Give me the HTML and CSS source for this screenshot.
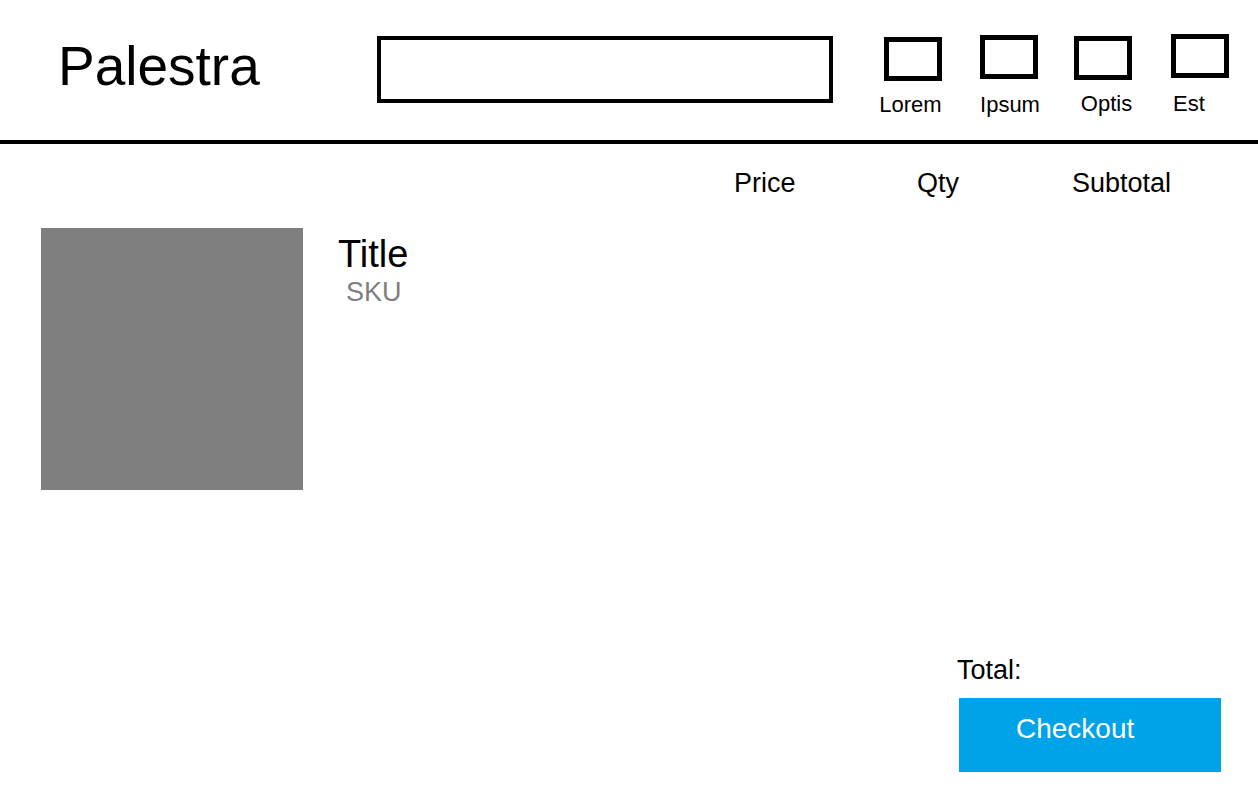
FILE: index.html
```html
<!DOCTYPE html>
<html lang="en">
<head>
<meta charset="utf-8">
<title>Palestra</title>
<link rel="stylesheet" href="styles.css">
</head>
<body>
<header class="header">
  <div class="logo">Palestra</div>
  <div class="search"></div>
  <nav class="nav">
    <div class="nav-item nav-item--lorem"><span class="nav-box"></span><span class="nav-label">Lorem</span></div>
    <div class="nav-item nav-item--ipsum"><span class="nav-box"></span><span class="nav-label">Ipsum</span></div>
    <div class="nav-item nav-item--optis"><span class="nav-box"></span><span class="nav-label">Optis</span></div>
    <div class="nav-item nav-item--est"><span class="nav-box"></span><span class="nav-label">Est</span></div>
  </nav>
</header>
<main class="cart">
  <div class="cart-head">
    <span></span>
    <span class="col-label">Price</span>
    <span class="col-label">Qty</span>
    <span class="col-label">Subtotal</span>
  </div>
  <div class="cart-item">
    <div class="thumb"></div>
    <div class="item-info">
      <div class="item-title">Title</div>
      <div class="item-sku">SKU</div>
    </div>
  </div>
  <div class="summary">
    <div class="total">Total:</div>
    <button class="checkout" type="button">Checkout</button>
  </div>
</main>
</body>
</html>
```
FILE: styles.css
```css
* { box-sizing: border-box; }

body {
  margin: 0;
  font-family: "Liberation Sans", Arial, sans-serif;
  color: #000;
  background: #fff;
}

.header {
  display: flex;
  align-items: flex-start;
  height: 144px;
  border-bottom: 4px solid #000;
}

.logo {
  width: 377px;
  padding-left: 58px;
  margin-top: 39px;
  font-size: 55px;
  line-height: 1;
}

.search {
  width: 456px;
  height: 67px;
  margin-top: 36px;
  border: 4px solid #000;
}

.nav {
  display: flex;
  margin-left: 32px;
  margin-top: 36px;
}

.nav-item {
  width: 96px;
  display: flex;
  flex-direction: column;
  align-items: center;
}

.nav-box {
  display: block;
  width: 58px;
  height: 44px;
  border: 5px solid #000;
}

.nav-label {
  margin-top: 13px;
  font-size: 22px;
  line-height: 1;
}

.nav-item--lorem .nav-box { margin-top: 1px; }
.nav-item--lorem .nav-label { margin-right: 5px; }
.nav-item--ipsum .nav-box { margin-top: -1px; }
.nav-item--ipsum .nav-label { margin-top: 15px; margin-left: 2px; }
.nav-item--optis .nav-box { margin-left: -4px; }
.nav-item--optis .nav-label { margin-left: 3px; }
.nav-item--est .nav-box { margin-top: -2px; margin-left: -2px; }
.nav-item--est .nav-label { margin-top: 15px; margin-right: 24px; }

.cart {
  display: flex;
  flex-direction: column;
}

.cart-head {
  display: grid;
  grid-template-columns: 734px 183px 155px 1fr;
  margin-top: 26px;
}

.col-label {
  font-size: 27px;
  line-height: 1;
}

.cart-item {
  display: flex;
  align-items: flex-start;
  gap: 35px;
  padding-left: 41px;
  margin-top: 31px;
}

.thumb {
  width: 262px;
  height: 262px;
  background: #7f7f7f;
}

.item-info {
  display: flex;
  flex-direction: column;
  margin-top: 7px;
}

.item-title {
  font-size: 38px;
  line-height: 1;
}

.item-sku {
  margin-top: 6px;
  margin-left: 8px;
  font-size: 27px;
  line-height: 1;
  color: #7f7f7f;
}

.summary {
  align-self: flex-end;
  width: 264px;
  margin-right: 37px;
  margin-top: 167px;
  display: flex;
  flex-direction: column;
  align-items: flex-end;
}

.total {
  align-self: flex-start;
  font-size: 27px;
  line-height: 1;
}

.checkout {
  margin-top: 14px;
  width: 262px;
  height: 74px;
  border: 0;
  padding: 17px 0 0 57px;
  background: #00a3e8;
  color: #fff;
  font-family: "Liberation Sans", Arial, sans-serif;
  font-size: 28px;
  line-height: 1;
  text-align: left;
  display: flex;
  align-items: flex-start;
}
```
